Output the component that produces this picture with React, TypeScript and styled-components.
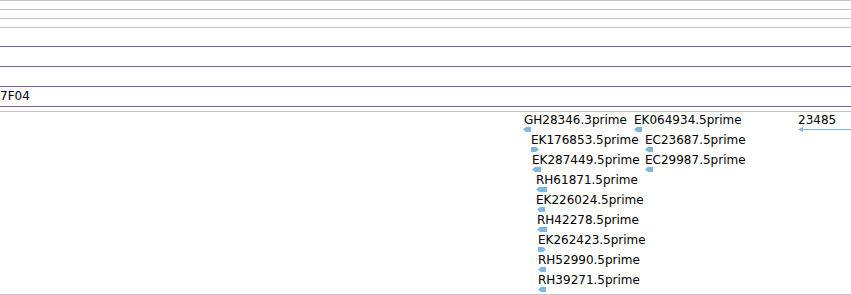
import React from "react";
import styled, { createGlobalStyle } from "styled-components";

const Global = createGlobalStyle`
  html, body { margin: 0; padding: 0; background: #fff; }
  body { font-family: "DejaVu Sans", "Liberation Sans", sans-serif; font-size: 12px; color: #000; }
`;

const Page = styled.div`
  width: 851px;
  height: 295px;
  overflow: hidden;
  display: flex;
  flex-direction: column;
`;

const Rule = styled.div`
  height: 0;
  border-top: 1px solid #c4c4c4;
`;

const Track = styled.div<{ $h: number; $line: string }>`
  height: ${(p) => p.$h}px;
  border-bottom: 1px solid ${(p) => p.$line};
  flex: none;
  position: relative;
  overflow: hidden;
`;

const TrackLabel = styled.div`
  padding-top: 2px;
  line-height: 14px;
  white-space: nowrap;
`;

const Canvas = styled.div`
  position: relative;
  height: 182px;
  border-bottom: 1px solid #c4c4c4;
  flex: none;
  overflow: hidden;
`;

const Feature = styled.div`
  position: absolute;
  display: flex;
  flex-direction: column;
  align-items: flex-start;
`;

const FeatureName = styled.span`
  line-height: 14px;
  white-space: nowrap;
`;

const Glyph = styled.svg`
  display: block;
  margin-top: 0;
`;

type Feat = { name: string; x: number; row: number; dir: "L" | "R"; w: number; gx?: number };

const feats: Feat[] = [
  { name: "GH28346.3prime", x: 524, row: 0, dir: "L", w: 8, gx: 523 },
  { name: "EK176853.5prime", x: 531, row: 1, dir: "R", w: 8 },
  { name: "EK287449.5prime", x: 532, row: 2, dir: "L", w: 9 },
  { name: "RH61871.5prime", x: 536, row: 3, dir: "L", w: 11 },
  { name: "EK226024.5prime", x: 536, row: 4, dir: "L", w: 8, gx: 537 },
  { name: "RH42278.5prime", x: 537, row: 5, dir: "L", w: 10 },
  { name: "EK262423.5prime", x: 538, row: 6, dir: "R", w: 8 },
  { name: "RH52990.5prime", x: 538, row: 7, dir: "L", w: 8 },
  { name: "RH39271.5prime", x: 538, row: 8, dir: "L", w: 8 },
  { name: "EK064934.5prime", x: 634, row: 0, dir: "L", w: 8 },
  { name: "EC23687.5prime", x: 645, row: 1, dir: "L", w: 8 },
  { name: "EC29987.5prime", x: 645, row: 2, dir: "L", w: 8 },
];

const BLUE = "#80b7e0";

function Arrow({ dir, w }: { dir: "L" | "R"; w: number }) {
  const pts =
    dir === "L"
      ? `0,2.5 3,0 ${w},0 ${w},5 3,5`
      : `0,0 ${w - 3},0 ${w},2.5 ${w - 3},5 0,5`;
  return (
    <Glyph width={w} height={5} viewBox={`0 0 ${w} 5`}>
      <polygon points={pts} fill={BLUE} />
    </Glyph>
  );
}

export default function App() {
  return (
    <>
      <Global />
      <Page>
        <Rule />
        <Track $h={8} $line="#c4c4c4" />
        <Track $h={8} $line="#c4c4c4" />
        <Track $h={8} $line="#c4c4c4" />
        <Track $h={18} $line="#7a5db6" />
        <Track $h={19} $line="#7a5db6" />
        <Track $h={19} $line="#7a5db6" />
        <Track $h={19} $line="#7a5db6">
          <TrackLabel>7F04</TrackLabel>
        </Track>
        <Track $h={4} $line="#c4c4c4" />
        <Canvas>
          {feats.map((f) => (
            <Feature key={f.name} style={{ left: f.x, top: 1 + f.row * 20 }}>
              <FeatureName>{f.name}</FeatureName>
              <span style={{ marginLeft: (f.gx ?? f.x) - f.x }}>
                <Arrow dir={f.dir} w={f.w} />
              </span>
            </Feature>
          ))}
          <Feature style={{ left: 798, top: 1 }}>
            <FeatureName>23485</FeatureName>
            <Glyph width={60} height={5} viewBox="0 0 60 5">
              <polygon points="0,2.5 5,0 5,5" fill={BLUE} />
              <rect x={3} y={2} width={57} height={1} fill={BLUE} />
            </Glyph>
          </Feature>
        </Canvas>
      </Page>
    </>
  );
}
